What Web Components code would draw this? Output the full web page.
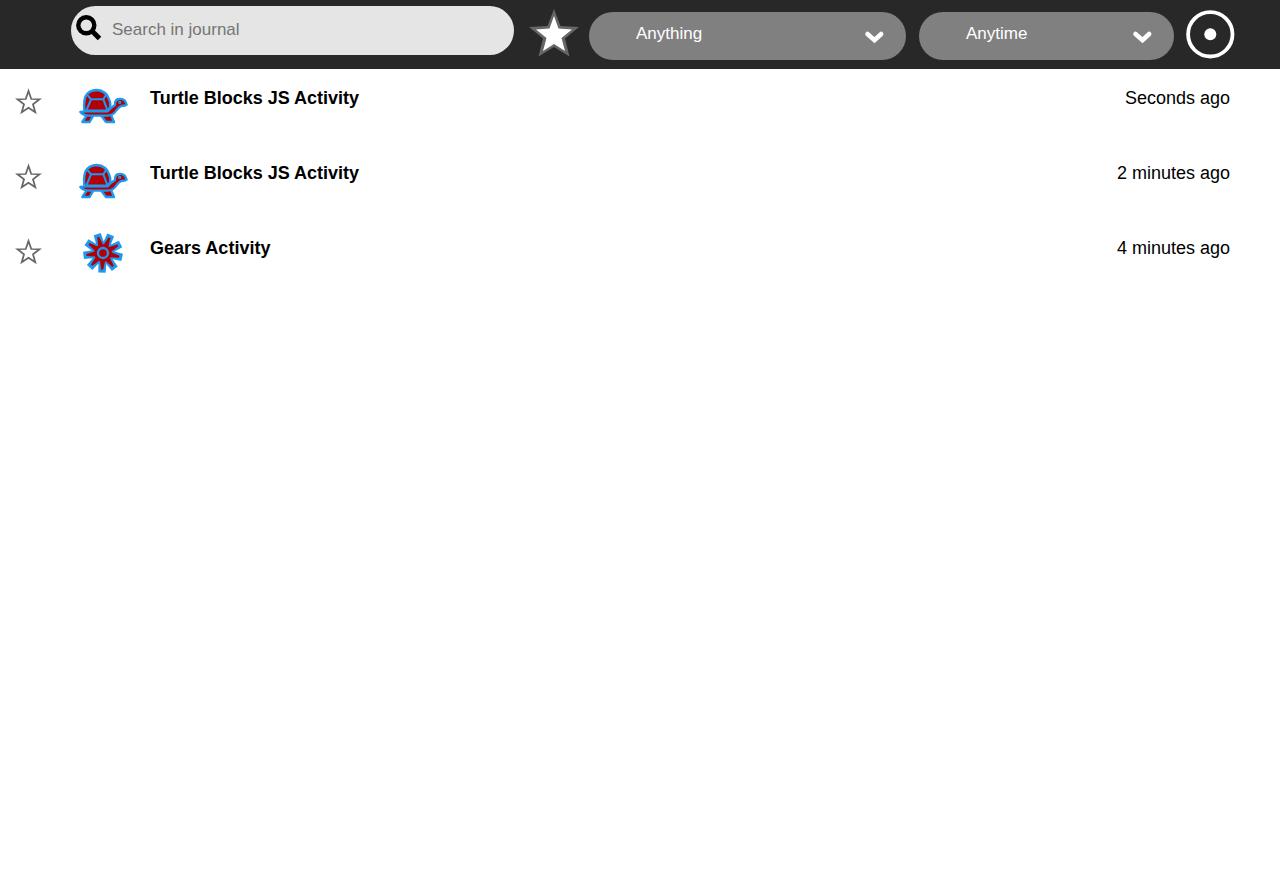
<!DOCTYPE html>
<html lang="en">
<head>
<meta charset="utf-8">
<title>Journal</title>
<style>
  body {
    margin: 0;
    background: #fff;
    color: #000;
    font: 17px/20px "Liberation Sans", Arial, sans-serif;
  }
</style>
</head>
<body>
<journal-toolbar>
  <search-field placeholder="Search in journal"></search-field>
  <favorite-filter></favorite-filter>
  <filter-select label="Type" options="Anything,Favorites,Activities"></filter-select>
  <filter-select label="Time" options="Anytime,Today,This week"></filter-select>
  <radar-button></radar-button>
</journal-toolbar>
<journal-list>
  <journal-entry icon="turtle">Turtle Blocks JS Activity<time slot="time">Seconds ago</time></journal-entry>
  <journal-entry icon="turtle">Turtle Blocks JS Activity<time slot="time">2 minutes ago</time></journal-entry>
  <journal-entry icon="gear">Gears Activity<time slot="time">4 minutes ago</time></journal-entry>
</journal-list>

<script>
const STAR = 'M24 3 L29.500 19 L46 19.500 L33 29.500 L37.500 45.500 L24 36.500 L10.500 45.500 L15 29.500 L2 19.500 L18.500 19 Z';

class BaseElement extends HTMLElement {
  render(html) {
    this.attachShadow({ mode: 'open' }).innerHTML = `<style>
      *, :host { box-sizing: border-box; }
      svg { display: block; flex: none; overflow: visible; }
      button { display: block; padding: 0; border: 0; background: none; cursor: pointer; }
    </style>${html}`;
  }
}

customElements.define('journal-toolbar', class extends BaseElement {
  constructor() {
    super();
    this.render(`<style>
      :host { display: block; }
      header {
        display: grid;
        grid-template-columns: 443fr 49px 317fr 255fr 49px;
        column-gap: 13px;
        align-items: start;
        min-height: 69px;
        padding: 6px 44px 9px 71px;
        background: #282828;
      }
    </style><header><slot></slot></header>`);
  }
});

customElements.define('search-field', class extends BaseElement {
  connectedCallback() {
    this.render(`<style>
      :host { display: block; min-width: 0; }
      label {
        display: flex;
        gap: 10px;
        height: 49px;
        padding: 8px 24px 8px 5px;
        border-radius: 25px;
        background: #e5e5e5;
      }
      input {
        flex: 1;
        min-width: 0;
        height: 32px;
        padding: 0 0 1px;
        border: 0;
        outline: 0;
        background: none;
        color: #000;
        font: inherit;
      }
      input::placeholder { color: #757575; }
    </style>
    <label>
      <svg width="26" height="28" viewBox="0 0 26 28" fill="none" stroke="#000" aria-hidden="true">
        <circle cx="10.300" cy="11.300" r="8" stroke-width="4.400"/>
        <path d="M16 17 L23.500 24.500" stroke-width="5"/>
      </svg>
      <input type="search" aria-label="${this.getAttribute('placeholder')}" placeholder="${this.getAttribute('placeholder')}">
    </label>`);
  }
});

customElements.define('favorite-filter', class extends BaseElement {
  constructor() {
    super();
    this.render(`<style>
      :host { display: flex; padding: 3px 0 0 1px; }
    </style>
    <button type="button" aria-label="Show favorites">
      <svg width="50" height="50" viewBox="0 0 50 50">
        <path fill="#666" d="M26 0 L32.500 17 L51 18 L37 29.500 L41.500 47.500 L26 38 L10.500 47.500 L15 29.500 L1 18 L19.500 17 Z"/>
        <path fill="#fff" d="M26 7 L30.500 19.500 L44 20.500 L33.500 29 L37 42 L26 35 L15 42 L18.500 29 L8 20.500 L21.500 19.500 Z"/>
      </svg>
    </button>`);
  }
});

customElements.define('filter-select', class extends BaseElement {
  connectedCallback() {
    const options = this.getAttribute('options').split(',').map(o => `<option>${o}</option>`).join('');
    this.render(`<style>
      :host { display: block; position: relative; min-width: 0; margin-top: 6px; }
      select {
        display: block;
        appearance: none;
        width: 100%;
        height: 48px;
        margin: 0;
        padding: 0 48px 5px 47px;
        border: 0;
        border-radius: 24px;
        background: #808080;
        color: #fff;
        font: inherit;
      }
      svg { position: absolute; right: 22px; top: 18px; pointer-events: none; }
    </style>
    <select aria-label="${this.getAttribute('label')}">${options}</select>
    <svg width="19" height="14" viewBox="0 0 19 14" fill="none" stroke="#fff" stroke-width="4.500" stroke-linecap="round" aria-hidden="true">
      <path d="M2.500 4 L9.500 10.200 L16.200 4"/>
    </svg>`);
  }
});

customElements.define('radar-button', class extends BaseElement {
  constructor() {
    super();
    this.render(`<style>:host { display: block; padding-top: 4px; }</style>
    <button type="button" aria-label="Home">
      <svg width="49" height="49" viewBox="0 0 49 49">
        <circle cx="23.300" cy="24.300" r="22.200" fill="none" stroke="#fff" stroke-width="3.800"/>
        <circle cx="23.300" cy="24.300" r="6" fill="#fff"/>
      </svg>
    </button>`);
  }
});

customElements.define('journal-list', class extends BaseElement {
  constructor() {
    super();
    this.setAttribute('role', 'list');
    this.render(`<style>:host { display: block; font-size: 18px; }</style><slot></slot>`);
  }
});

const teeth = draw => Array.from({ length: 9 }, (_, i) => `<g transform="rotate(${-17 + i * 40})">${draw}</g>`).join('');

const ICONS = {
  turtle: `<g transform="translate(-6 1) scale(.3333)" fill="#b20008" stroke="#1c9af0" stroke-width="7" stroke-linejoin="round">
    <path d="M45 100 L49 108 L37 126 H59 L70 106 M93 106 L108 126 H132 L121 100"/>
    <path d="M31 96 Q40 95 47 94 H112 Q124 82 135 75 Q134 58 148 57 Q166 55 170 74 Q166 78 154 78 Q146 82 140 90 Q130 107 112 107 H58 Q39 106 31 96 Z"/>
    <path d="M43 92 Q39 54 53 40 Q65 30 80 30 Q108 31 118 60 Q126 79 113 92 Z"/>
    <path fill="none" stroke-width="6" d="M49 41 L63 58 H100 L111 41 M63 58 L50 90 M100 58 L112 90"/>
    <circle cx="149" cy="67" r="3" fill="#b20008" stroke-width="4"/>
  </g>`,
  gear: `<g transform="translate(-6 -4) scale(.3333) translate(99 84)">
    <g fill="#1c9af0"><circle r="35"/>${teeth('<path d="M-12 -26 L-11 -59 H11 L12 -26 Z"/>')}</g>
    <g fill="#b20008"><circle r="26"/>${teeth('<path d="M-8 -22 L-3 -50 H3 L8 -22 Z"/>')}</g>
    <circle r="15" fill="none" stroke="#1c9af0" stroke-width="7"/>
  </g>`
};

customElements.define('journal-entry', class extends BaseElement {
  connectedCallback() {
    this.setAttribute('role', 'listitem');
    this.render(`<style>
      :host {
        display: grid;
        grid-template-columns: 24px 90px 1fr auto;
        align-items: start;
        min-height: 75px;
        padding: 10px 50px 10px 16px;
      }
      .favorite { padding-top: 10px; }
      .activity { margin-left: 36px; }
      .title { padding: 9px 0 0 20px; font-weight: bold; }
      .time { padding-top: 9px; }
    </style>
    <button class="favorite" type="button" aria-label="Favorite">
      <svg width="25" height="25" viewBox="-1 -1 50 50" fill="#fff" stroke="#666" stroke-width="3.500"><path d="${STAR}"/></svg>
    </button>
    <button class="activity" type="button" aria-label="Open activity">
      <svg width="54" height="54" viewBox="0 0 54 54">${ICONS[this.getAttribute('icon')]}</svg>
    </button>
    <div class="title"><slot></slot></div>
    <div class="time"><slot name="time"></slot></div>`);
  }
});
</script>
</body>
</html>
